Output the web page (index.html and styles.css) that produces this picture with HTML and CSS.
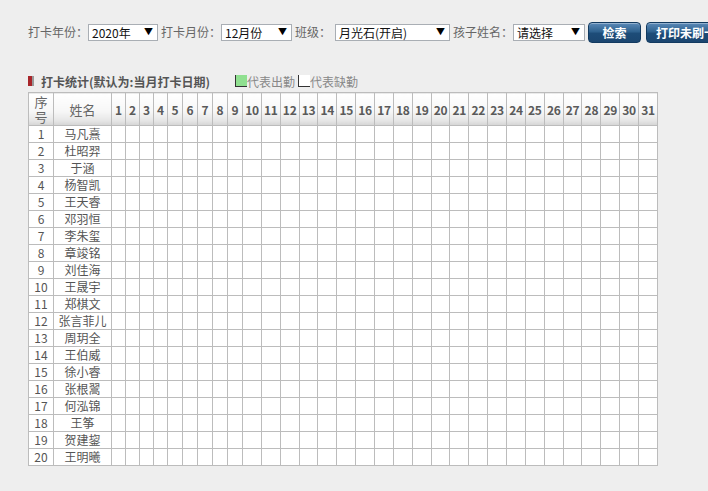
FILE: index.html
```html
<!DOCTYPE html>
<html lang="zh-CN">
<head>
<meta charset="utf-8">
<title>打卡统计</title>
<link rel="stylesheet" href="styles.css">
</head>
<body>
<div class="page">
  <div class="filters">
    <span class="lbl">打卡年份：</span><span class="sel w-year">2020年<i class="arr">▼</i></span>
    <span class="lbl">打卡月份：</span><span class="sel w-month">12月份<i class="arr">▼</i></span>
    <span class="lbl">班级：</span><span class="sel w-class">月光石(开启)<i class="arr">▼</i></span>
    <span class="lbl">孩子姓名：</span><span class="sel w-kid">请选择<i class="arr">▼</i></span>
    <button class="btn">检索</button>
    <button class="btn btn-wide">打印未刷卡</button>
  </div>

  <div class="sect">
    <span class="sect-icon"></span>
    <span class="sect-title">打卡统计(默认为:当月打卡日期)</span>
    <span class="legend"><span class="box box-green"></span>代表出勤</span>
    <span class="legend"><span class="box box-white"></span>代表缺勤</span>
  </div>

  <table class="grid">
    <colgroup>
      <col class="c-seq"><col class="c-name">
      <col class="c-d1"><col class="c-d1"><col class="c-d1"><col class="c-d1">
      <col class="c-d2"><col class="c-d2"><col class="c-d2"><col class="c-d2"><col class="c-d2">
      <col><col><col><col><col><col><col><col><col><col><col>
      <col><col><col><col><col><col><col><col><col><col><col>
    </colgroup>
    <thead>
      <tr><th class="seq-h">序号</th><th class="name-h">姓名</th><th>1</th><th>2</th><th>3</th><th>4</th><th>5</th><th>6</th><th>7</th><th>8</th><th>9</th><th>10</th><th>11</th><th>12</th><th>13</th><th>14</th><th>15</th><th>16</th><th>17</th><th>18</th><th>19</th><th>20</th><th>21</th><th>22</th><th>23</th><th>24</th><th>25</th><th>26</th><th>27</th><th>28</th><th>29</th><th>30</th><th>31</th></tr>
    </thead>
    <tbody>
      <tr><td>1</td><td>马凡熹</td><td></td><td></td><td></td><td></td><td></td><td></td><td></td><td></td><td></td><td></td><td></td><td></td><td></td><td></td><td></td><td></td><td></td><td></td><td></td><td></td><td></td><td></td><td></td><td></td><td></td><td></td><td></td><td></td><td></td><td></td><td></td></tr>
      <tr><td>2</td><td>杜昭羿</td><td></td><td></td><td></td><td></td><td></td><td></td><td></td><td></td><td></td><td></td><td></td><td></td><td></td><td></td><td></td><td></td><td></td><td></td><td></td><td></td><td></td><td></td><td></td><td></td><td></td><td></td><td></td><td></td><td></td><td></td><td></td></tr>
      <tr><td>3</td><td>于涵</td><td></td><td></td><td></td><td></td><td></td><td></td><td></td><td></td><td></td><td></td><td></td><td></td><td></td><td></td><td></td><td></td><td></td><td></td><td></td><td></td><td></td><td></td><td></td><td></td><td></td><td></td><td></td><td></td><td></td><td></td><td></td></tr>
      <tr><td>4</td><td>杨智凯</td><td></td><td></td><td></td><td></td><td></td><td></td><td></td><td></td><td></td><td></td><td></td><td></td><td></td><td></td><td></td><td></td><td></td><td></td><td></td><td></td><td></td><td></td><td></td><td></td><td></td><td></td><td></td><td></td><td></td><td></td><td></td></tr>
      <tr><td>5</td><td>王天睿</td><td></td><td></td><td></td><td></td><td></td><td></td><td></td><td></td><td></td><td></td><td></td><td></td><td></td><td></td><td></td><td></td><td></td><td></td><td></td><td></td><td></td><td></td><td></td><td></td><td></td><td></td><td></td><td></td><td></td><td></td><td></td></tr>
      <tr><td>6</td><td>邓羽恒</td><td></td><td></td><td></td><td></td><td></td><td></td><td></td><td></td><td></td><td></td><td></td><td></td><td></td><td></td><td></td><td></td><td></td><td></td><td></td><td></td><td></td><td></td><td></td><td></td><td></td><td></td><td></td><td></td><td></td><td></td><td></td></tr>
      <tr><td>7</td><td>李朱玺</td><td></td><td></td><td></td><td></td><td></td><td></td><td></td><td></td><td></td><td></td><td></td><td></td><td></td><td></td><td></td><td></td><td></td><td></td><td></td><td></td><td></td><td></td><td></td><td></td><td></td><td></td><td></td><td></td><td></td><td></td><td></td></tr>
      <tr><td>8</td><td>章竣铭</td><td></td><td></td><td></td><td></td><td></td><td></td><td></td><td></td><td></td><td></td><td></td><td></td><td></td><td></td><td></td><td></td><td></td><td></td><td></td><td></td><td></td><td></td><td></td><td></td><td></td><td></td><td></td><td></td><td></td><td></td><td></td></tr>
      <tr><td>9</td><td>刘佳海</td><td></td><td></td><td></td><td></td><td></td><td></td><td></td><td></td><td></td><td></td><td></td><td></td><td></td><td></td><td></td><td></td><td></td><td></td><td></td><td></td><td></td><td></td><td></td><td></td><td></td><td></td><td></td><td></td><td></td><td></td><td></td></tr>
      <tr><td>10</td><td>王晟宇</td><td></td><td></td><td></td><td></td><td></td><td></td><td></td><td></td><td></td><td></td><td></td><td></td><td></td><td></td><td></td><td></td><td></td><td></td><td></td><td></td><td></td><td></td><td></td><td></td><td></td><td></td><td></td><td></td><td></td><td></td><td></td></tr>
      <tr><td>11</td><td>郑棋文</td><td></td><td></td><td></td><td></td><td></td><td></td><td></td><td></td><td></td><td></td><td></td><td></td><td></td><td></td><td></td><td></td><td></td><td></td><td></td><td></td><td></td><td></td><td></td><td></td><td></td><td></td><td></td><td></td><td></td><td></td><td></td></tr>
      <tr><td>12</td><td>张言菲儿</td><td></td><td></td><td></td><td></td><td></td><td></td><td></td><td></td><td></td><td></td><td></td><td></td><td></td><td></td><td></td><td></td><td></td><td></td><td></td><td></td><td></td><td></td><td></td><td></td><td></td><td></td><td></td><td></td><td></td><td></td><td></td></tr>
      <tr><td>13</td><td>周玥全</td><td></td><td></td><td></td><td></td><td></td><td></td><td></td><td></td><td></td><td></td><td></td><td></td><td></td><td></td><td></td><td></td><td></td><td></td><td></td><td></td><td></td><td></td><td></td><td></td><td></td><td></td><td></td><td></td><td></td><td></td><td></td></tr>
      <tr><td>14</td><td>王伯威</td><td></td><td></td><td></td><td></td><td></td><td></td><td></td><td></td><td></td><td></td><td></td><td></td><td></td><td></td><td></td><td></td><td></td><td></td><td></td><td></td><td></td><td></td><td></td><td></td><td></td><td></td><td></td><td></td><td></td><td></td><td></td></tr>
      <tr><td>15</td><td>徐小睿</td><td></td><td></td><td></td><td></td><td></td><td></td><td></td><td></td><td></td><td></td><td></td><td></td><td></td><td></td><td></td><td></td><td></td><td></td><td></td><td></td><td></td><td></td><td></td><td></td><td></td><td></td><td></td><td></td><td></td><td></td><td></td></tr>
      <tr><td>16</td><td>张根翯</td><td></td><td></td><td></td><td></td><td></td><td></td><td></td><td></td><td></td><td></td><td></td><td></td><td></td><td></td><td></td><td></td><td></td><td></td><td></td><td></td><td></td><td></td><td></td><td></td><td></td><td></td><td></td><td></td><td></td><td></td><td></td></tr>
      <tr><td>17</td><td>何泓锦</td><td></td><td></td><td></td><td></td><td></td><td></td><td></td><td></td><td></td><td></td><td></td><td></td><td></td><td></td><td></td><td></td><td></td><td></td><td></td><td></td><td></td><td></td><td></td><td></td><td></td><td></td><td></td><td></td><td></td><td></td><td></td></tr>
      <tr><td>18</td><td>王筝</td><td></td><td></td><td></td><td></td><td></td><td></td><td></td><td></td><td></td><td></td><td></td><td></td><td></td><td></td><td></td><td></td><td></td><td></td><td></td><td></td><td></td><td></td><td></td><td></td><td></td><td></td><td></td><td></td><td></td><td></td><td></td></tr>
      <tr><td>19</td><td>贺建鋆</td><td></td><td></td><td></td><td></td><td></td><td></td><td></td><td></td><td></td><td></td><td></td><td></td><td></td><td></td><td></td><td></td><td></td><td></td><td></td><td></td><td></td><td></td><td></td><td></td><td></td><td></td><td></td><td></td><td></td><td></td><td></td></tr>
      <tr><td>20</td><td>王明曦</td><td></td><td></td><td></td><td></td><td></td><td></td><td></td><td></td><td></td><td></td><td></td><td></td><td></td><td></td><td></td><td></td><td></td><td></td><td></td><td></td><td></td><td></td><td></td><td></td><td></td><td></td><td></td><td></td><td></td><td></td><td></td></tr>
    </tbody>
  </table>
</div>
</body>
</html>
```

FILE: styles.css
```css
html, body {
  margin: 0;
  padding: 0;
  background: #eeeeee;
  font-family: "Noto Sans CJK SC", "Noto Sans", sans-serif;
  color: #555;
  overflow: hidden;
}

.page {
  padding: 21px 0 0 28px;
}

.filters {
  display: flex;
  align-items: center;
  white-space: nowrap;
  height: 22px;
  width: 760px;
}

.filters > * {
  flex: none;
}

.lbl {
  font-size: 12px;
  color: #666;
  line-height: 16px;
}

.sel {
  position: relative;
  display: inline-block;
  box-sizing: border-box;
  height: 17px;
  line-height: 15px;
  border: 1px solid #a9aeb4;
  background: #fff;
  color: #111;
  font-size: 12px;
  padding-left: 3px;
  margin-right: 3px;
}

.arr {
  position: absolute;
  right: 4px;
  top: 0;
  font-style: normal;
  font-size: 9px;
  line-height: 13px;
  color: #000;
}

.w-year { width: 70px; }
.w-month { width: 71px; }
.w-class { width: 115px; margin-left: 4px; }
.w-kid { width: 72px; }

.btn {
  box-sizing: border-box;
  height: 21px;
  width: 53px;
  margin: 1px 0 0 0;
  padding: 0;
  border: 1px solid #123a60;
  border-radius: 4px;
  background: linear-gradient(#5b8ab8 0%, #2f628f 45%, #1d4c78 55%, #1b4670 100%);
  box-shadow: inset 0 1px 0 rgba(255,255,255,0.35);
  color: #fff;
  font-family: "Noto Sans CJK SC", sans-serif;
  font-weight: bold;
  font-size: 12px;
  line-height: 18px;
}

.btn-wide {
  width: 80px;
  margin-left: 5px;
}

.sect {
  display: flex;
  align-items: center;
  margin-top: 30px;
  height: 16px;
}

.sect-icon {
  width: 4px;
  height: 10px;
  background: #a8252a;
  border-right: 2px solid #9a9a9a;
  margin-right: 7px;
}

.sect-title {
  font-size: 12px;
  font-weight: bold;
  color: #555;
}

.legend {
  display: inline-flex;
  align-items: center;
  font-size: 12px;
  color: #888;
}

.sect-title + .legend { margin-left: 25px; }

.box {
  display: inline-block;
  box-sizing: border-box;
  width: 12px;
  height: 12px;
  border-left: 1px solid #333;
  border-bottom: 1px solid #333;
}

.legend + .legend .box { margin-left: 3px; }

.box-green { background: #90e090; }
.box-white { background: #fff; }

.grid {
  margin-top: 3px;
  width: 630px;
  table-layout: fixed;
  border-collapse: collapse;
  background: #fff;
  border: 1px solid #b0b0b0;
}

.c-seq { width: 25px; }
.c-name { width: 58px; }
.c-d1 { width: 14px; }
.c-d2 { width: 15px; }

.grid th,
.grid td {
  border: 1px solid #bcbcbc;
  padding: 0;
  text-align: center;
  overflow: hidden;
  white-space: nowrap;
}

.grid th {
  height: 32px;
  background: linear-gradient(#ffffff 0%, #f7f7f7 55%, #e6e6e6 85%, #d4d4d4 100%);
  font-size: 12px;
  font-weight: bold;
  color: #5a5a5a;
  letter-spacing: -0.3px;
}

.grid th.seq-h,
.grid th.name-h {
  font-weight: normal;
  font-size: 13px;
  color: #666;
  letter-spacing: 0;
}

.grid th.seq-h {
  white-space: normal;
  line-height: 15px;
  padding: 0 4px;
}

.grid td {
  height: 16px;
  font-size: 12px;
  line-height: 16px;
  color: #555;
}
```
